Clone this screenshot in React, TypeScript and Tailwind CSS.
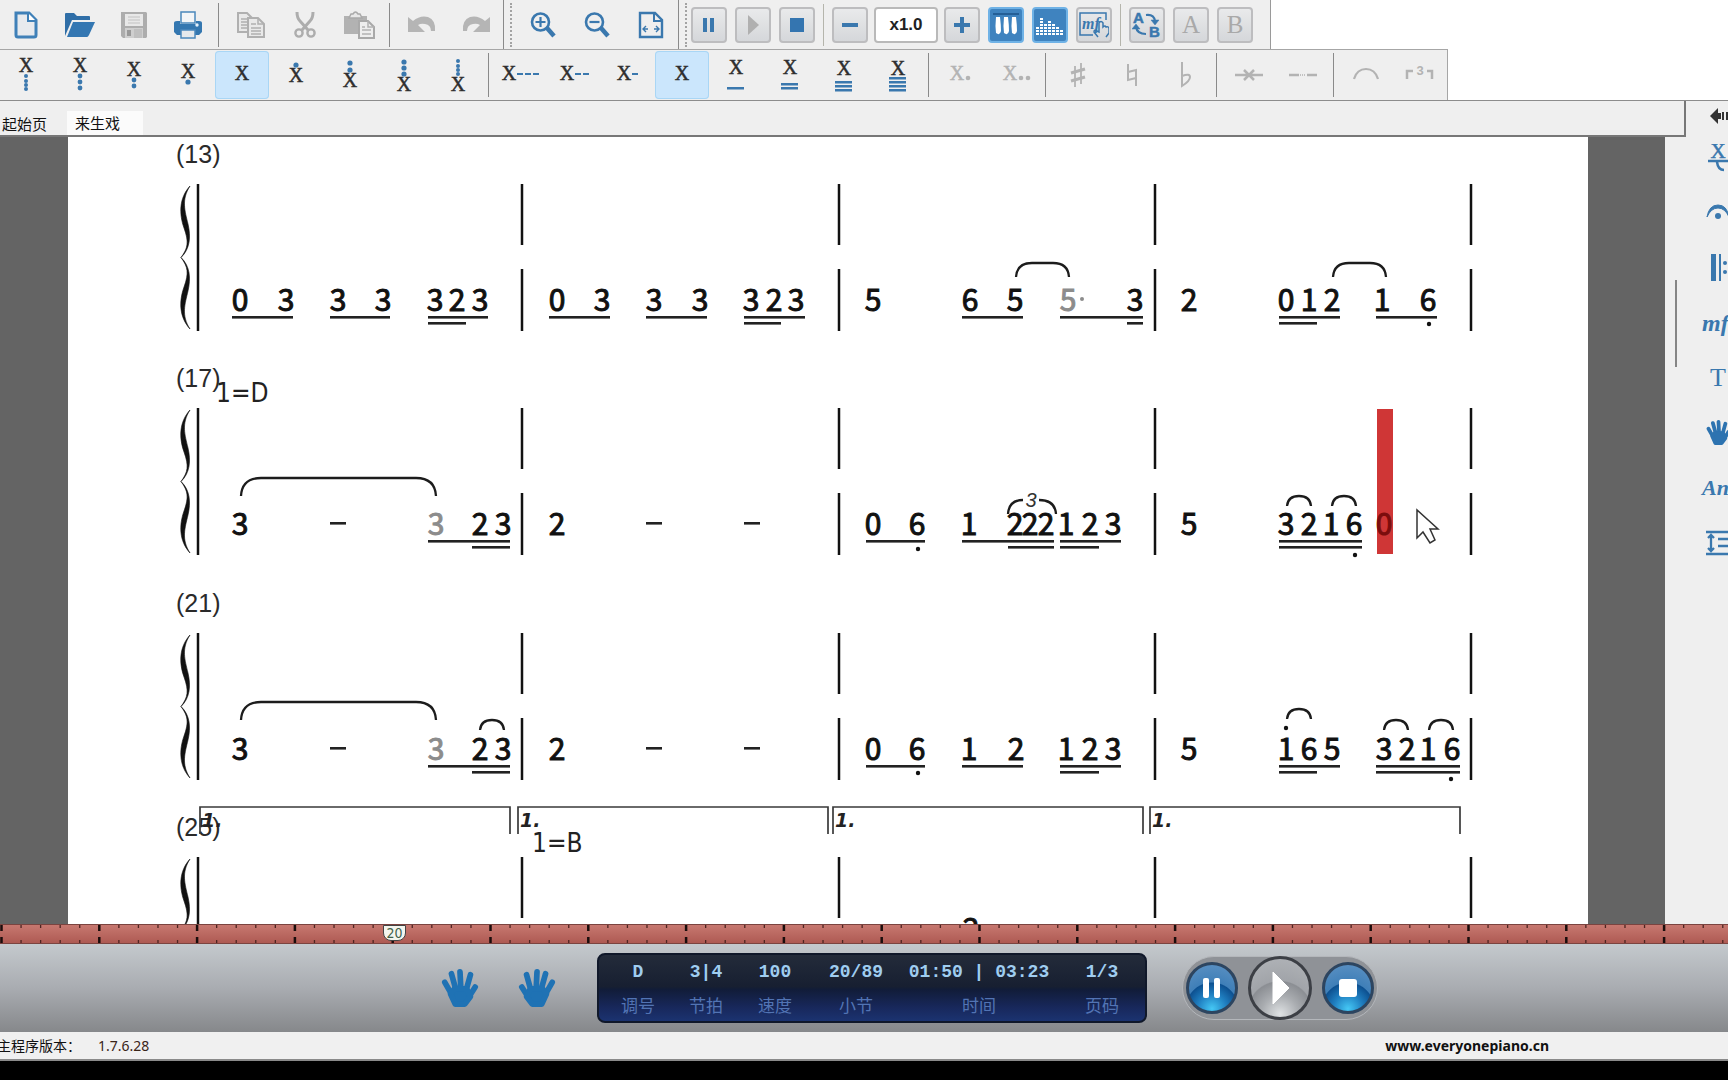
import React from "react";

const BLUE = "#3a78ae";
const GREY = "#b3b3b3";

/* ---------- toolbar helpers ---------- */

function ToolButton({ label, active, children }: { label: string; active?: boolean; children: React.ReactNode }) {
  return (
    <button
      type="button"
      aria-label={label}
      title={label}
      className={
        active
          ? "flex h-12 w-[54px] shrink-0 items-center justify-center rounded-sm bg-[#cbe6fc] ring-1 ring-[#a9d6f5] ring-inset"
          : "flex h-12 w-[54px] shrink-0 items-center justify-center"
      }
    >
      {children}
    </button>
  );
}

function KeyButton({ label, active, children }: { label: string; active?: boolean; children: React.ReactNode }) {
  return (
    <button
      type="button"
      aria-label={label}
      title={label}
      className={
        active
          ? "flex size-9 shrink-0 items-center justify-center rounded border-2 border-[#6fb2e6] bg-[#3f83bf]"
          : "flex size-9 shrink-0 items-center justify-center rounded border-2 border-[#bdbdbf] bg-linear-to-b from-[#e9eaeb] to-[#d5d7da]"
      }
    >
      {children}
    </button>
  );
}

const Divider = () => <div className="mr-[5px] ml-[3px] h-11 w-px shrink-0 bg-[#8a8a8a]" />;
const Grip = () => (
  <div className="mr-1 flex h-full items-center gap-[6px]">
    <div className="h-full w-px bg-[#8a8a8a]" />
    <div className="h-[44px] border-l-2 border-dotted border-[#a3a3a3]" />
  </div>
);

/* ---------- file icons ---------- */

const NewIcon = () => (
  <svg width="26" height="28" viewBox="0 0 26 28">
    <path d="M3 2h13l7 7v15q0 2-2 2H5q-2 0-2-2z" fill="#e7eaee" stroke="#3f80b8" strokeWidth="3" />
    <path d="M15 2v8h8" fill="#fff" stroke="#3f80b8" strokeWidth="2" />
  </svg>
);
const OpenIcon = () => (
  <svg width="32" height="26" viewBox="0 0 32 26">
    <path d="M1 24V2q0-1 1-1h8l3 3h12q1 0 1 1v3H8z" fill="#2f6ea7" />
    <path d="M9 10h22l-6 13q-1 2-2 2H3z" fill="#3477b2" />
  </svg>
);
const SaveIcon = () => (
  <svg width="28" height="28" viewBox="0 0 28 28">
    <path d="M1 1h25l1 1v24l-1 1H3l-2-2z" fill="#adadad" />
    <rect x="5" y="3" width="18" height="12" fill="#e8e8e8" />
    <path d="M8 6h12M8 9h12M8 12h12" stroke="#c2c2c2" strokeWidth="1" />
    <rect x="5" y="17" width="18" height="10" fill="#cfcfcf" />
    <rect x="7" y="19" width="4" height="6" fill="#999" />
    <rect x="14" y="18" width="8" height="9" fill="#c0c0c0" />
  </svg>
);
const PrintIcon = () => (
  <svg width="28" height="28" viewBox="0 0 28 28">
    <rect x="7" y="1" width="14" height="11" fill="#f3f5f7" stroke="#4b88bc" strokeWidth="1.5" />
    <path d="M0 12q0-2 3-2h3v3h16v-3h3q3 0 3 2v9l-3 3H3l-3-3z" fill="#3477b0" />
    <rect x="7" y="19" width="14" height="8" fill="#e6e9ec" stroke="#4b88bc" strokeWidth="1.5" />
    <circle cx="23" cy="14" r="1.7" fill="#e5f1fb" />
  </svg>
);
const CopyIcon = () => (
  <svg width="28" height="28" viewBox="0 0 28 28" stroke="#b0b0b0" strokeWidth="2" fill="#e9e9e9">
    <path d="M1 2h9l5 5v14H1z" />
    <path d="M4 8h7M4 11h7M4 14h7M4 17h7" strokeWidth="1.3" />
    <path d="M11 7h10l6 6v13H11z" />
    <path d="M21 7v6h6" fill="none" strokeWidth="1.5" />
    <path d="M14 13h5M14 17h10M14 20h10M14 23h10" strokeWidth="1.3" />
  </svg>
);
const CutIcon = () => (
  <svg width="22" height="28" viewBox="0 0 22 28" fill="none" stroke="#adadad">
    <path d="M3 1q0 6 3 9l8 9M19 1q0 6-3 9l-8 9" strokeWidth="3" />
    <circle cx="5" cy="22" r="3.6" strokeWidth="2.4" />
    <circle cx="17" cy="22" r="3.6" strokeWidth="2.4" />
  </svg>
);
const PasteIcon = () => (
  <svg width="32" height="28" viewBox="0 0 32 28">
    <path d="M1 5h23v18H1z" fill="#b2b2b2" />
    <path d="M6 7h13l-2-4h-2q-2.500-4-5 0H8z" fill="#e8e8e8" stroke="#a9a9a9" strokeWidth="1.500" />
    <path d="M16 10h9l6 6v11H16z" fill="#eee" stroke="#a9a9a9" strokeWidth="2" />
    <path d="M25 10v6h6M19 16h3M19 19h9M19 23h9" fill="none" stroke="#b2b2b2" strokeWidth="1.500" />
  </svg>
);
const UndoIcon = ({ flip }: { flip?: boolean }) => (
  <svg width="30" height="22" viewBox="0 0 30 22">
    <path
      transform={flip ? "translate(30 0) scale(-1 1)" : undefined}
      d="M1 3l5 4Q13 1 21 3q8 3 7 14h-4q0-6-6-7-4-1-7 1l7 7H1z"
      fill="#b5b5b5"
    />
  </svg>
);
const ZoomIcon = ({ plus }: { plus?: boolean }) => (
  <svg width="26" height="28" viewBox="0 0 26 28" fill="none" stroke={BLUE}>
    <circle cx="10.500" cy="11" r="8.500" strokeWidth="2.600" />
    <path d={plus ? "M5.500 11h10M10.500 6v10" : "M5.500 11h10"} strokeWidth="2.200" />
    <path d="M17 17l7 8" strokeWidth="4.500" />
  </svg>
);
const FitIcon = () => (
  <svg width="26" height="28" viewBox="0 0 26 28" fill="none" stroke={BLUE}>
    <path d="M2 2h15l7 7v17H2z" strokeWidth="2.400" />
    <path d="M16 2v8h8" strokeWidth="2" />
    <path d="M5 18h5M16 18h5M8 15l-3 3 3 3M18 15l3 3-3 3" strokeWidth="1.400" />
  </svg>
);

/* ---------- note icons ---------- */

/* X with octave dots, duration bars, dashes or augmentation dots around it. */
function Cap({ y, x = 18, dots = [], r = 2, bars = [], dashes = 0, dim }: {
  y: number;
  x?: number;
  dots?: number[];
  r?: number;
  bars?: number[];
  dashes?: number;
  dim?: number;
}) {
  return (
    <svg width="46" height="48" viewBox="-5 -6 46 48">
      <text
        x={x}
        y={y}
        textAnchor="middle"
        fill={dim ? GREY : "#2e2e2e"}
        stroke={dim ? GREY : "#2e2e2e"}
        strokeWidth="0.5"
        className="font-['Liberation_Serif',serif] text-[20px]"
      >
        X
      </text>
      {dots.map((d) => (
        <circle key={d} cx="18" cy={d} r={r} fill={BLUE} />
      ))}
      {bars.map((b) => (
        <rect key={b} x="9" y={b} width="17" height="2.500" fill={BLUE} />
      ))}
      {Array.from({ length: dashes }, (_, i) => (
        <rect key={i} x={x + 8 + i * 8} y={y - 7} width="6" height="2" fill={BLUE} />
      ))}
      {Array.from({ length: dim ?? 0 }, (_, i) => (
        <circle key={i} cx={x + 11 + i * 7} cy={y - 2} r="2.300" fill={GREY} />
      ))}
    </svg>
  );
}

/* ---------- hand ---------- */

function Hand({ flip, size, color = "#1f72b4" }: { flip?: boolean; size: number; color?: string }) {
  return (
    <svg width={size} height={size} viewBox="0 0 38 40">
      <g
        transform={flip ? "translate(38 0) scale(-1 1)" : undefined}
        stroke={color}
        fill={color}
        strokeWidth="6"
        strokeLinecap="round"
        strokeLinejoin="round"
      >
        <path d="M3 14l8 14M10 5l5 18M19 3l1 20M30 6l-5 18M35 19l-7 11" />
        <path d="M9 26l4-5h13l4 8-6 8H14z" />
      </g>
    </svg>
  );
}

/* ---------- score ---------- */

type Note = [x: number, label: string, dim?: boolean];
type System = {
  dy: number;
  number: string;
  notes: Note[];
  lines: [number, number, number][];
  rests?: number[];
  ties?: [number, number, number, number][];
  dots?: [number, number][];
};

const systems: System[] = [
  {
    dy: 0,
    number: "(13)",
    notes: [
      [240, "0"], [286, "3"], [338, "3"], [383, "3"], [435, "3"], [457, "2"], [480, "3"],
      [557, "0"], [602, "3"], [654, "3"], [700, "3"], [751, "3"], [774, "2"], [796, "3"],
      [873, "5"], [970, "6"], [1015, "5"], [1068, "5", true], [1135, "3"],
      [1189, "2"], [1286, "0"], [1309, "1"], [1332, "2"], [1382, "1"], [1428, "6"],
    ],
    lines: [
      [232, 293, 0], [330, 390, 0], [428, 488, 0], [428, 466, 1],
      [549, 610, 0], [646, 707, 0], [744, 805, 0], [744, 781, 1],
      [962, 1023, 0], [1060, 1143, 0], [1127, 1143, 1],
      [1279, 1340, 0], [1279, 1317, 1], [1376, 1437, 0],
    ],
    ties: [[1016, 1069, 263, 14], [1333, 1386, 263, 14]],
    dots: [[1429, 324]],
  },
  {
    dy: 224,
    number: "(17)",
    notes: [
      [240, "3"], [436, "3", true], [480, "2"], [503, "3"], [557, "2"],
      [873, "0"], [917, "6"], [969, "1"], [1015, "2"], [1030, "2"], [1046, "2"], [1066, "1"], [1090, "2"], [1113, "3"],
      [1189, "5"], [1286, "3"], [1309, "2"], [1331, "1"], [1354, "6"],
    ],
    lines: [
      [428, 510, 0], [472, 510, 1], [866, 925, 0], [962, 1054, 0], [1008, 1054, 1],
      [1060, 1121, 0], [1060, 1099, 1], [1279, 1362, 0], [1279, 1362, 1],
    ],
    rests: [330, 646, 744],
    ties: [[241, 436, 254, 18], [1287, 1311, 272, 10], [1332, 1356, 272, 10]],
    dots: [[918, 325], [1355, 331]],
  },
  {
    dy: 449,
    number: "(21)",
    notes: [
      [240, "3"], [436, "3", true], [480, "2"], [503, "3"], [557, "2"],
      [873, "0"], [917, "6"], [969, "1"], [1016, "2"], [1066, "1"], [1090, "2"], [1113, "3"],
      [1189, "5"], [1286, "1"], [1309, "6"], [1332, "5"], [1384, "3"], [1407, "2"], [1428, "1"], [1452, "6"],
    ],
    lines: [
      [428, 510, 0], [472, 510, 1], [866, 925, 0], [962, 1023, 0], [1060, 1121, 0], [1060, 1099, 1],
      [1279, 1340, 0], [1279, 1317, 1], [1376, 1460, 0], [1376, 1460, 1],
    ],
    rests: [330, 646, 744],
    ties: [[241, 436, 253, 18], [480, 504, 271, 10], [1287, 1311, 260, 10], [1384, 1408, 271, 10], [1429, 1453, 271, 10]],
    dots: [[918, 324], [1286, 279], [1451, 330]],
  },
  { dy: 673, number: "(25)", notes: [[971, "2"]], lines: [] },
];

const BARS = [522, 839, 1155, 1471];
const VOLTAS = [200, 518, 833, 1150];

const tiePath = (x1: number, x2: number, y: number, h: number) => {
  const r = Math.min(h + 2, (x2 - x1) / 2);
  return `M${x1} ${y + h}Q${x1 + 1} ${y} ${x1 + r} ${y}H${x2 - r}Q${x2 - 1} ${y} ${x2} ${y + h}`;
};

function BracePath() {
  const half = "M190 186C179 198 179 214 184 228S188 248 181 257.500C190 249 191 237 188 224S181 200 190 186Z";
  return (
    <g fill="#111" stroke="#111" strokeWidth="0.6">
      <path d={half} />
      <path d={half} transform="translate(0 515) scale(1 -1)" />
    </g>
  );
}

const digit = "font-['Noto_Sans_CJK_SC',sans-serif] text-[30px] [stroke-width:1]";

function Digit({ x, y, color, children }: { x: number; y: number; color: string; children: string }) {
  return (
    <text x={x} y={y} textAnchor="middle" fill={color} stroke={color} className={digit}>
      {children}
    </text>
  );
}

function Score() {
  return (
    <svg viewBox="68 137 1520 787" className="block h-auto w-full" role="img" aria-label="来生戏">
      {systems.map((s) => (
        <g key={s.number} transform={`translate(0 ${s.dy})`}>
          <text x="176" y="163" fill="#2a2a2a" className="font-['Liberation_Sans',sans-serif] text-[25px]">
            {s.number}
          </text>
          <BracePath />
          <path d="M198 184V331" stroke="#111" strokeWidth="2.500" />
          {BARS.map((b) => (
            <path key={b} d={`M${b} 184v61M${b} 269v62`} stroke="#111" strokeWidth="2.500" />
          ))}
          {s.notes.map(([x, label, dim]) => (
            <Digit key={x} x={x} y={s.lines.length ? 311 : 267} color={dim ? "#8c8c8c" : "#111"}>
              {label}
            </Digit>
          ))}
          {s.lines.map(([a, b, level], i) => (
            <rect key={i} x={a} y={316 + level * 6} width={b - a} height="2.600" fill="#222" />
          ))}
          {s.rests?.map((x) => <rect key={x} x={x} y="298" width="16" height="2.600" fill="#222" />)}
          {s.ties?.map((t, i) => <path key={i} d={tiePath(...t)} fill="none" stroke="#1c1c1c" strokeWidth="2.300" />)}
          {s.dots?.map(([x, y]) => <circle key={x} cx={x} cy={y} r="2.200" fill="#111" />)}
        </g>
      ))}

      <circle cx="1082" cy="299" r="2" fill="#8c8c8c" />
      <text x="216" y="402" fill="#222" className="font-['DejaVu_Sans_Condensed','Noto_Sans',sans-serif] text-[26px]">1=D</text>
      <text x="532" y="852" fill="#222" className="font-['DejaVu_Sans_Condensed','Noto_Sans',sans-serif] text-[26px]">1=B</text>

      <path d="M1008 514Q1009 500 1023 500M1039 500Q1055 500 1056 514" fill="none" stroke="#1c1c1c" strokeWidth="2.300" />
      <text x="1031" y="507" textAnchor="middle" fill="#333" className="font-['Liberation_Sans',sans-serif] text-[20px] italic">3</text>

      {VOLTAS.map((x) => (
        <g key={x}>
          <path d={`M${x} 834V807H${x + 310}V834`} fill="none" stroke="#3a3a3a" strokeWidth="1.700" />
          <text x={x + 2} y="827" fill="#222" className="font-['DejaVu_Sans',sans-serif] text-[19px] font-bold italic">1.</text>
        </g>
      ))}

      <rect x="1377" y="409" width="16" height="145" fill="#cf3636" />
      <Digit x={1384} y={535} color="#7c0d0d">0</Digit>

      <path d="M1417 510v28l6-6 7 11 5-3-5-11h8z" fill="#fff" stroke="#333" strokeWidth="1.500" />
    </svg>
  );
}

/* ---------- timeline ---------- */

function Timeline() {
  const ticks = Array.from({ length: 90 }, (_, i) => ({ x: 1.5 + i * 19.56, major: i % 5 === 0 }));
  return (
    <div className="relative h-5 shrink-0 overflow-hidden border-y border-[#7b4440] bg-linear-to-b from-[#c77870] to-[#ae5a53]">
      <svg width="1760" height="18" aria-hidden="true" className="block">
        {ticks.map(({ x, major }) =>
          major ? (
            <path key={x} d={`M${x} 0v6M${x} 12v6`} stroke="#1a0d0c" strokeWidth="2.500" />
          ) : (
            <path key={x} d={`M${x} 0v3M${x} 15v3`} stroke="#4e2522" strokeWidth="1.300" />
          ),
        )}
      </svg>
      <div className="absolute top-0 left-[383px] flex h-4 w-[23px] items-center justify-center rounded-b-lg border border-[#444] bg-[#f4f5ee] font-['DejaVu_Sans_Condensed','Noto_Sans',sans-serif] text-[14px] leading-none text-[#41604a]">
        20
      </div>
    </div>
  );
}

/* ---------- transport ---------- */

const readouts = [
  ["D", "调号"],
  ["3|4", "节拍"],
  ["100", "速度"],
  ["20/89", "小节"],
  ["01:50 | 03:23", "时间"],
  ["1/3", "页码"],
];

function Transport() {
  const round =
    "flex size-[52px] shrink-0 items-center justify-center rounded-full border-[3px] border-[#2d4560] bg-[radial-gradient(circle_at_50%_95%,#45c8f5_0%,#1f7ec0_30%,#0d5090_52%,#3f7fb8_54%,#5f93c4_100%)]";
  return (
    <section className="flex h-[88px] shrink-0 items-center justify-center bg-linear-to-b from-[#c4c9cd] via-[#a9acb1] to-[#86888b] pl-[91px]">
      <button type="button" aria-label="左手" className="mr-[39px]">
        <Hand size={38} />
      </button>
      <button type="button" aria-label="右手" className="mr-[41px]">
        <Hand size={38} flip />
      </button>
      <dl className="mr-[35px] grid h-[70px] w-[550px] grid-cols-[68px_68px_70px_92px_154px_92px] rounded-lg border-2 border-[#10182a] bg-[linear-gradient(#232b3a_0%,#171f31_48%,#111c38_52%,#18285c_80%,#1b3370_100%)] pl-[5px] text-center">
        {readouts.map(([value, name]) => (
          <div key={name} className="flex flex-col-reverse justify-center gap-[9px]">
            <dt className="font-['Noto_Sans_CJK_SC',sans-serif] text-[17px] leading-6 text-[#5274b4]">{name}</dt>
            <dd className="font-['Liberation_Mono',monospace] text-[18px] leading-6 font-bold whitespace-pre text-[#9fcdf0]">{value}</dd>
          </div>
        ))}
      </dl>
      <div className="flex h-16 w-[196px] items-center justify-between rounded-full border border-[#b4b7bb] bg-[#8f9297] px-[3px]">
        <button type="button" aria-label="暂停" className={round}>
          <svg width="20" height="22" viewBox="0 0 20 22" fill="#fff">
            <rect x="1" y="1" width="6" height="20" rx="2" />
            <rect x="12" y="1" width="6" height="20" rx="2" />
          </svg>
        </button>
        <button
          type="button"
          aria-label="播放"
          className="flex size-[64px] shrink-0 items-center justify-center rounded-full border-[3px] border-[#3c3f45] bg-[radial-gradient(circle_at_50%_95%,#dfe2e4_0%,#a9acb0_30%,#8b8e93_52%,#a1a4a9_54%,#b2b5b9_100%)]"
        >
          <svg width="20" height="36" viewBox="0 0 20 36">
            <path d="M3 2l16 16L3 34z" fill="#fff" stroke="#fff" strokeLinejoin="round" />
          </svg>
        </button>
        <button type="button" aria-label="停止" className={round}>
          <svg width="18" height="18" viewBox="0 0 18 18">
            <rect width="18" height="18" rx="3" fill="#fff" />
          </svg>
        </button>
      </div>
    </section>
  );
}

/* ---------- side palette ---------- */

const serif = "font-['Liberation_Serif',serif]";

const sideTools: [string, React.ReactNode][] = [
  ["装饰音", (
    <svg width="24" height="28" viewBox="0 0 24 28">
      <text x="12" y="14" textAnchor="middle" fill={BLUE} stroke={BLUE} strokeWidth="0.5" className={`${serif} text-[21px]`}>X</text>
      <path d="M2 17h22M11 18q1 8 7 8" stroke={BLUE} strokeWidth="2.500" fill="none" />
    </svg>
  )],
  ["延长记号", (
    <svg width="24" height="28" viewBox="0 0 24 28">
      <path d="M1 18Q3 6 12 6t11 12Q19 9 12 9T1 18z" fill={BLUE} stroke={BLUE} />
      <circle cx="12" cy="17" r="3" fill={BLUE} />
    </svg>
  )],
  ["反复记号", (
    <svg width="24" height="28" viewBox="0 0 24 28" fill={BLUE}>
      <path d="M5 0h5v27H5zM13 0h2v27h-2z" />
      <circle cx="19" cy="9" r="2" />
      <circle cx="19" cy="18" r="2" />
    </svg>
  )],
  ["力度", <span className={`${serif} -ml-1 text-[24px] leading-7 font-bold italic text-[#3a78ae]`}>mf</span>],
  ["文字", <span className={`${serif} ml-1 text-[26px] leading-7 text-[#3a78ae]`}>T</span>],
  ["手型", <Hand size={25} color="#2d73b0" />],
  ["速度", <span className={`${serif} -ml-1 text-[22px] leading-7 font-bold italic text-[#3a78ae]`}>An</span>],
  ["行距", (
    <svg width="24" height="28" viewBox="0 0 24 28" fill="none" stroke={BLUE} strokeWidth="2.300">
      <path d="M0 3h24M0 25h24M12 10h12M12 17h12M5 6v16M2 9l3-3 3 3M2 19l3 3 3-3" />
    </svg>
  )],
];

function SidePalette() {
  return (
    <aside className="w-[42px] shrink-0 overflow-hidden bg-[#efefef] pl-5">
      <button type="button" aria-label="收起" className="flex h-[29px] w-8 items-center">
        <svg width="24" height="16" viewBox="0 0 24 16" fill="#333">
          <path d="M4 8l8-8v5h3v6h-3v5zM16 4h2v8h-2zM20 4h2v8h-2z" />
        </svg>
      </button>
      {sideTools.map(([label, icon]) => (
        <button key={label} type="button" aria-label={label} className="flex h-[55px] w-12 items-center">
          {icon}
        </button>
      ))}
    </aside>
  );
}

/* ---------- app ---------- */

export default function App() {
  return (
    <div className="flex h-screen flex-col overflow-hidden bg-white font-['Noto_Sans_CJK_SC',sans-serif] text-[#111]">
      <header className="shrink-0">
        <div role="toolbar" aria-label="文件" className="flex h-[49px] w-fit items-center border-r border-[#9a9a9a] bg-[#efefef] pr-[17px]">
          <div className="-ml-px flex items-center">
            <ToolButton label="新建"><NewIcon /></ToolButton>
            <ToolButton label="打开"><OpenIcon /></ToolButton>
            <ToolButton label="保存"><SaveIcon /></ToolButton>
            <ToolButton label="打印"><PrintIcon /></ToolButton>
            <Divider />
            <ToolButton label="复制"><CopyIcon /></ToolButton>
            <ToolButton label="剪切"><CutIcon /></ToolButton>
            <ToolButton label="粘贴"><PasteIcon /></ToolButton>
            <Divider />
            <ToolButton label="撤销"><UndoIcon /></ToolButton>
            <ToolButton label="重做"><UndoIcon flip /></ToolButton>
          </div>
          <Grip />
          <ToolButton label="放大"><ZoomIcon plus /></ToolButton>
          <ToolButton label="缩小"><ZoomIcon /></ToolButton>
          <ToolButton label="适合页宽"><FitIcon /></ToolButton>
          <Grip />
          <div className="flex items-center gap-2">
            <KeyButton label="暂停">
              <svg width="14" height="14" viewBox="0 0 14 14" fill={BLUE}><path d="M1 0h4v14H1zM8 0h4v14H8z" /></svg>
            </KeyButton>
            <KeyButton label="播放">
              <svg width="16" height="22" viewBox="0 0 16 22" fill="#b0b0b0"><path d="M3 1l11 10L3 21z" /></svg>
            </KeyButton>
            <KeyButton label="停止">
              <svg width="14" height="14" viewBox="0 0 14 14"><rect width="14" height="14" fill="#3475b0" /></svg>
            </KeyButton>
            <div className="h-[42px] w-px bg-[#b5b5ac]" />
            <KeyButton label="减速">
              <svg width="18" height="16" viewBox="0 0 18 16" fill={BLUE}><path d="M1 6h16v4H1z" /></svg>
            </KeyButton>
            <input
              aria-label="播放速度"
              defaultValue="x1.0"
              className="-mx-[2px] h-9 w-16 rounded border-2 border-[#b9b9b9] bg-white text-center font-['Liberation_Sans',sans-serif] text-[17px] font-bold text-[#222]"
            />
            <KeyButton label="加速">
              <svg width="18" height="18" viewBox="0 0 18 18" fill={BLUE}><path d="M1 7h6V1h4v6h6v4h-6v6H7v-6H1z" /></svg>
            </KeyButton>
            <KeyButton label="键盘" active>
              <svg width="28" height="26" viewBox="0 0 28 26">
                <path d="M1 2h26" stroke="#245f97" strokeWidth="2" />
                <path d="M4 5h4q1 8 1 14-1 5-5 2-1-7 0-16zM12 5h4q1 8 1 14-1 5-5 2-1-7 0-16zM20 5h4q1 8 1 14-1 5-5 2-1-7 0-16z" fill="#fff" />
              </svg>
            </KeyButton>
            <KeyButton label="频谱" active>
              <svg width="30" height="24" viewBox="0 0 30 24" fill="#fff">
                {[3, 6, 4, 5, 4, 3, 2].map((n, i) =>
                  Array.from({ length: n }, (_, j) => <rect key={`${i}-${j}`} x={1 + i * 4} y={20 - j * 3} width="3" height="2" />),
                )}
              </svg>
            </KeyButton>
            <KeyButton label="力度手势">
              <svg width="30" height="28" viewBox="0 0 30 28" fill="none" stroke={BLUE} strokeWidth="1.500">
                <path d="M27 9V2H1v22h13" />
                <text x="3" y="18" fill={BLUE} stroke="none" className="font-['Liberation_Serif',serif] text-[16px] font-bold italic">mf</text>
                <path d="M19 26l-4-5q0-3 3-1l2 1v-9q2-3 4 0v4q2-2 3 0 3-1 3 2v4l-3 4" />
              </svg>
            </KeyButton>
            <div className="h-[42px] w-px bg-[#b5b5ac]" />
            <KeyButton label="AB循环">
              <svg width="30" height="30" viewBox="0 0 30 30" fill={BLUE} stroke={BLUE} strokeWidth="0.500">
                <text x="1" y="13" className="font-['Liberation_Sans',sans-serif] text-[15px] font-bold">A</text>
                <text x="17" y="27" className="font-['Liberation_Sans',sans-serif] text-[15px] font-bold">B</text>
                <path d="M14 5q8-1 9 6M4 17q1 7 10 7" fill="none" strokeWidth="2" />
                <path d="M19 10h8l-4 5zM0 19h8l-4-5z" />
              </svg>
            </KeyButton>
            <KeyButton label="A点"><span className={`${serif} text-[25px] leading-none text-[#a9a9a9]`}>A</span></KeyButton>
            <KeyButton label="B点"><span className={`${serif} text-[25px] leading-none text-[#a9a9a9]`}>B</span></KeyButton>
          </div>
        </div>
        <div role="toolbar" aria-label="音符" className="flex h-[51px] w-fit items-center border-t border-r border-[#a6a6a6] bg-[#efefef]">
          <div className="-ml-px flex items-center">
            <ToolButton label="低四个八度"><Cap y={15} dots={[19, 24, 28, 32]} /></ToolButton>
            <ToolButton label="低三个八度"><Cap y={15} dots={[19, 25, 31]} r={2.400} /></ToolButton>
            <ToolButton label="低两个八度"><Cap y={19} dots={[23, 29]} r={2.400} /></ToolButton>
            <ToolButton label="低八度"><Cap y={21} dots={[25]} r={2.600} /></ToolButton>
            <ToolButton label="中音" active><Cap y={23} /></ToolButton>
            <ToolButton label="高八度"><Cap y={25} dots={[8]} r={2.600} /></ToolButton>
            <ToolButton label="高两个八度"><Cap y={30} dots={[6, 13]} r={2.600} /></ToolButton>
            <ToolButton label="高三个八度"><Cap y={34} dots={[5, 11, 17]} r={2.600} /></ToolButton>
            <ToolButton label="高四个八度"><Cap y={34} dots={[4, 9, 13, 17]} /></ToolButton>
          </div>
          <Divider />
          <div className="-ml-px flex items-center">
            <ToolButton label="全音符"><Cap x={7} y={23} dashes={3} /></ToolButton>
            <ToolButton label="附点二分音符"><Cap x={11} y={23} dashes={2} /></ToolButton>
            <ToolButton label="二分音符"><Cap x={14} y={23} dashes={1} /></ToolButton>
            <ToolButton label="四分音符" active><Cap y={23} /></ToolButton>
            <ToolButton label="八分音符"><Cap y={17} bars={[30]} /></ToolButton>
            <ToolButton label="十六分音符"><Cap y={17} bars={[26, 30]} /></ToolButton>
            <ToolButton label="三十二分音符"><Cap y={18} bars={[24, 28, 32]} /></ToolButton>
            <ToolButton label="六十四分音符"><Cap y={18} bars={[20, 24, 28, 32]} /></ToolButton>
          </div>
          <Divider />
          <ToolButton label="附点"><Cap x={14} y={23} dim={1} /></ToolButton>
          <ToolButton label="双附点"><Cap x={13} y={23} dim={2} /></ToolButton>
          <Divider />
          <ToolButton label="升号">
            <svg width="18" height="28" viewBox="0 0 18 28" fill="none" stroke={GREY}>
              <path d="M6 5v21M12 2v21" strokeWidth="1.800" />
              <path d="M2 12l14-4M2 20l14-4" strokeWidth="3" />
            </svg>
          </ToolButton>
          <ToolButton label="还原号">
            <svg width="14" height="26" viewBox="0 0 14 26" fill="none" stroke={GREY} strokeWidth="2">
              <path d="M3 2v16l8-2M11 24V8l-8 2" />
            </svg>
          </ToolButton>
          <ToolButton label="降号">
            <svg width="16" height="28" viewBox="0 0 16 28" fill="none" stroke={GREY} strokeWidth="2">
              <path d="M4 1v24q8-5 8-9t-8-1" />
            </svg>
          </ToolButton>
          <Divider />
          <ToolButton label="删除音符">
            <svg width="28" height="14" viewBox="0 0 28 14" stroke={GREY} strokeWidth="2.500">
              <path d="M0 7h28M9 2l10 10M19 2L9 12" />
            </svg>
          </ToolButton>
          <ToolButton label="延音线">
            <svg width="30" height="8" viewBox="0 0 30 8" stroke={GREY} strokeWidth="2.500">
              <path d="M1 4h10M19 4h10" />
              <path d="M12 4h6" strokeWidth="1.500" strokeDasharray="1 1" />
            </svg>
          </ToolButton>
          <Divider />
          <ToolButton label="连音线">
            <svg width="26" height="18" viewBox="0 0 26 18" fill="none" stroke={GREY} strokeWidth="2.200">
              <path d="M1 13Q4 3 13 3t12 10" />
            </svg>
          </ToolButton>
          <ToolButton label="三连音">
            <svg width="30" height="26" viewBox="0 0 30 26" fill="none" stroke={GREY} strokeWidth="2.500">
              <path d="M2 17V9h6M22 9h5v8" />
              <text x="15" y="13" textAnchor="middle" fill={GREY} stroke="none" className="font-['Liberation_Sans',sans-serif] text-[13px] font-bold">3</text>
            </svg>
          </ToolButton>
        </div>
      </header>

      <div className="flex min-h-0 flex-1 border-t border-[#8c8c8c]">
        <main className="flex min-w-0 flex-1 flex-col">
          <nav className="flex h-9 shrink-0 items-end border-r-2 border-b-2 border-[#777] bg-[#efefef] text-[15px] leading-[22px]">
            <button type="button" className="h-[22px] w-[67px] pl-[2px] text-left">起始页</button>
            <button type="button" className="h-6 w-[76px] bg-[#fbfbfb] pl-2 text-left">来生戏</button>
          </nav>
          <div className="flex min-h-0 flex-1">
            <div className="min-w-0 flex-1 overflow-hidden bg-[#646464] pr-[77px] pl-[68px]">
              <div className="h-full overflow-hidden bg-white">
                <Score />
              </div>
            </div>
            <div className="flex w-[21px] justify-center bg-[#efefef]">
              <div className="mt-[143px] h-[87px] w-[2px] bg-[#858585]" />
            </div>
          </div>
        </main>
        <SidePalette />
      </div>

      <Timeline />
      <Transport />
      <footer className="flex h-[29px] shrink-0 items-center justify-between border-b-2 border-[#8a8a8a] bg-[#f0f0f0] pr-[179px] text-[14px]">
        <p className="-ml-[3px] flex gap-[17px]">
          <span>主程序版本：</span>
          <span className="font-['Noto_Sans',sans-serif] text-[#3a2418]">1.7.6.28</span>
        </p>
        <a href="#home" className="font-['Noto_Sans',sans-serif] text-[14px] font-bold">www.everyonepiano.cn</a>
      </footer>
      <div className="h-[19px] shrink-0 bg-black" />
    </div>
  );
}
